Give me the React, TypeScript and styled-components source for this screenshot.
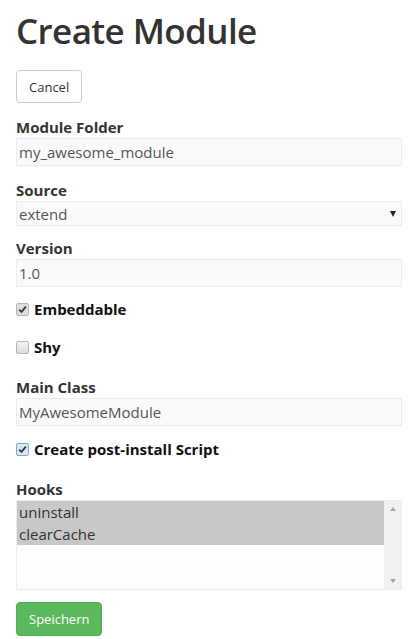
import * as React from "react";
import styled, { createGlobalStyle } from "styled-components";

const GlobalStyle = createGlobalStyle`
  html, body {
    margin: 0;
    padding: 0;
    background: #ffffff;
  }
  body {
    font-family: "Open Sans", "Segoe UI", "Liberation Sans", sans-serif;
    color: #333333;
  }
`;

const Page = styled.div`
  padding: 0 12px 0 16px;
  width: 386px;
`;

const Title = styled.h1`
  margin: 11px 0 19px;
  font-size: 35px;
  line-height: 40px;
  font-weight: 600;
  color: #333333;
  letter-spacing: -0.6px;
`;

interface ButtonProps {
  readonly variant?: "default" | "success";
}

const Button = styled.button<ButtonProps>`
  display: inline-flex;
  align-items: center;
  justify-content: center;
  box-sizing: border-box;
  height: ${({ variant }) => (variant === "success" ? "34px" : "33px")};
  padding: 0 12px;
  border-radius: 4px;
  font-family: inherit;
  font-size: 13px;
  cursor: pointer;
  background: ${({ variant }) => (variant === "success" ? "#5cb85c" : "#ffffff")};
  border: 1px solid ${({ variant }) => (variant === "success" ? "#4cae4c" : "#cccccc")};
  color: ${({ variant }) => (variant === "success" ? "#ffffff" : "#333333")};
`;

const Toolbar = styled.div`
  display: flex;
  margin-bottom: 14px;
`;

interface GroupProps {
  readonly gap?: number;
}

const Group = styled.div<GroupProps>`
  display: flex;
  flex-direction: column;
  margin-bottom: ${({ gap }) => (gap !== undefined ? gap : 13)}px;
`;

const Label = styled.label`
  display: block;
  font-size: 15px;
  line-height: 20px;
  font-weight: 700;
  margin-bottom: 1px;
`;

const TextInput = styled.input`
  box-sizing: border-box;
  width: 100%;
  height: 28px;
  padding: 0 2px;
  border: 1px solid #ececec;
  background: #fafafa;
  font-family: inherit;
  font-size: 15px;
  color: #555555;
  outline: none;
`;

const SelectWrap = styled.div`
  position: relative;
  width: 100%;
`;

const Select = styled.select`
  box-sizing: border-box;
  width: 100%;
  height: 25px;
  padding: 0 2px;
  border: 1px solid #ececec;
  background: #fafafa;
  font-family: inherit;
  font-size: 15px;
  color: #555555;
  appearance: none;
  outline: none;
`;

const Caret = styled.span`
  position: absolute;
  right: 6px;
  top: 10px;
  width: 0;
  height: 0;
  border-left: 3.5px solid transparent;
  border-right: 3.5px solid transparent;
  border-top: 6px solid #222222;
  pointer-events: none;
`;

interface CheckRowProps {
  readonly gap: number;
}

const CheckRow = styled.label<CheckRowProps>`
  display: flex;
  align-items: center;
  gap: 5px;
  height: 20px;
  font-size: 15px;
  font-weight: 700;
  color: #111111;
  margin-bottom: ${({ gap }) => gap}px;
`;

interface BoxProps {
  readonly checked: boolean;
  readonly focused?: boolean;
}

const Box = styled.span<BoxProps>`
  box-sizing: border-box;
  display: inline-flex;
  align-items: center;
  justify-content: center;
  width: 13px;
  height: 13px;
  margin-top: 1px;
  border-radius: 2px;
  border: 1px solid ${({ focused }) => (focused ? "#7ea6d8" : "#b5b5b5")};
  background: ${({ focused, checked }) =>
    focused ? "#dbe6f4" : checked ? "#dedede" : "linear-gradient(#f4f4f4, #dcdcdc)"};
`;

const ListBox = styled.div`
  box-sizing: border-box;
  display: flex;
  width: 100%;
  height: 90px;
  border: 1px solid #ececec;
  background: #fdfdfd;
`;

const Options = styled.div`
  flex: 1;
  display: flex;
  flex-direction: column;
`;

interface OptionProps {
  readonly selected: boolean;
}

const Option = styled.div<OptionProps>`
  height: 22px;
  line-height: 22px;
  padding: 0 2px;
  font-size: 15px;
  color: #333333;
  background: ${({ selected }) => (selected ? "#c8c8c8" : "transparent")};
`;

const ScrollTrack = styled.div`
  width: 17px;
  display: flex;
  flex-direction: column;
  justify-content: space-between;
  align-items: center;
  padding: 6px 0;
  background: #f1f1f1;
`;

interface ArrowProps {
  readonly up: boolean;
}

const Arrow = styled.span<ArrowProps>`
  width: 0;
  height: 0;
  border-left: 3.5px solid transparent;
  border-right: 3.5px solid transparent;
  ${({ up }) => (up ? "border-bottom: 4px solid #a3a3a3;" : "border-top: 4px solid #a3a3a3;")}
`;

const Check = () => (
  <svg width="9" height="9" viewBox="0 0 9 9">
    <path d="M1.2 4.6 L3.5 7 L7.8 1.6" fill="none" stroke="#333" strokeWidth="1.8" />
  </svg>
);

const hooks = [
  { name: "uninstall", selected: true },
  { name: "clearCache", selected: true },
];

export default class App extends React.Component<{}, {}> {
  render(): JSX.Element {
    return (
      <Page>
        <GlobalStyle />
        <Title>Create Module</Title>

        <Toolbar>
          <Button>Cancel</Button>
        </Toolbar>

        <Group gap={14}>
          <Label>Module Folder</Label>
          <TextInput defaultValue="my_awesome_module" />
        </Group>

        <Group gap={12}>
          <Label>Source</Label>
          <SelectWrap>
            <Select defaultValue="extend">
              <option value="extend">extend</option>
            </Select>
            <Caret />
          </SelectWrap>
        </Group>

        <Group gap={12}>
          <Label>Version</Label>
          <TextInput defaultValue="1.0" />
        </Group>

        <CheckRow gap={18}>
          <Box checked>
            <Check />
          </Box>
          Embeddable
        </CheckRow>

        <CheckRow gap={20}>
          <Box checked={false} />
          Shy
        </CheckRow>

        <Group gap={13}>
          <Label>Main Class</Label>
          <TextInput defaultValue="MyAwesomeModule" />
        </Group>

        <CheckRow gap={20}>
          <Box checked focused>
            <Check />
          </Box>
          Create post-install Script
        </CheckRow>

        <Group gap={12}>
          <Label>Hooks</Label>
          <ListBox>
            <Options>
              {hooks.map(h => (
                <Option key={h.name} selected={h.selected}>
                  {h.name}
                </Option>
              ))}
            </Options>
            <ScrollTrack>
              <Arrow up />
              <Arrow up={false} />
            </ScrollTrack>
          </ListBox>
        </Group>

        <Button variant="success">Speichern</Button>
      </Page>
    );
  }
}
